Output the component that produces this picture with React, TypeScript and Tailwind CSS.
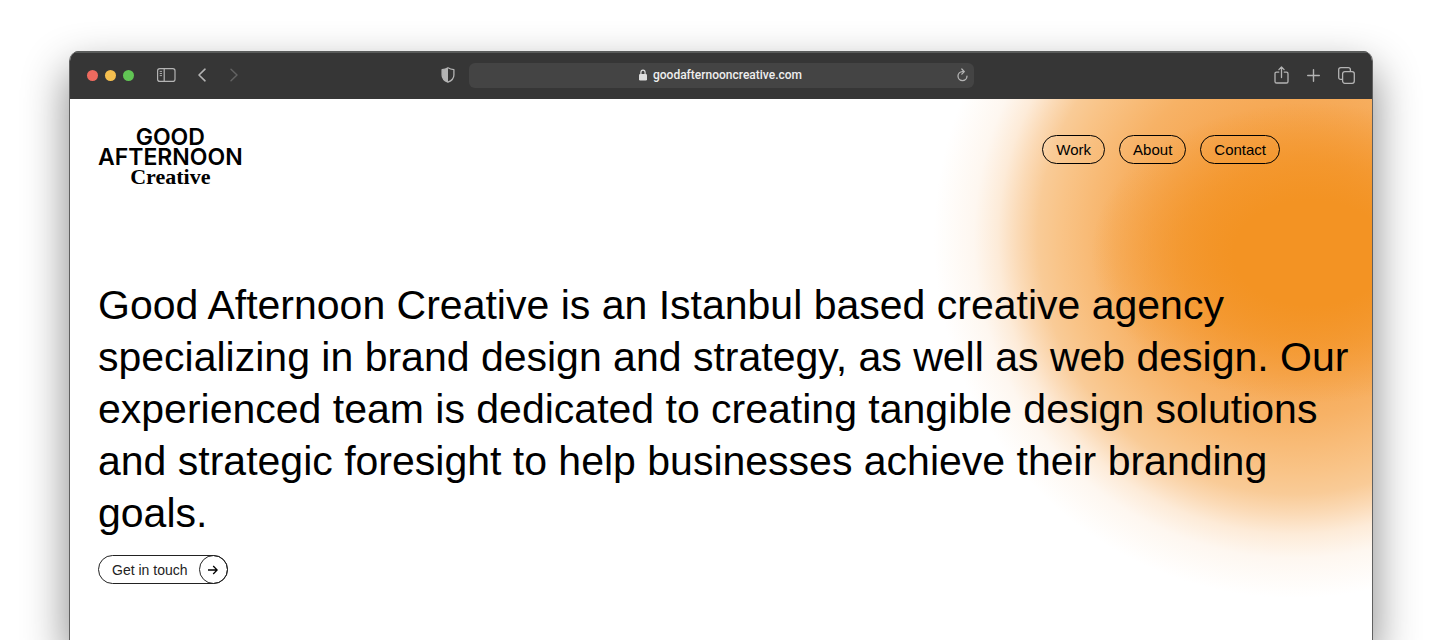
import type { ReactNode } from "react";

const navLinks = ["Work", "About", "Contact"];

function ToolButton({ label, children, className = "" }: { label: string; children: ReactNode; className?: string }) {
  return (
    <button type="button" aria-label={label} className={`flex h-6 shrink-0 items-center justify-center ${className}`}>
      {children}
    </button>
  );
}

function Toolbar() {
  return (
    <header className="flex h-12 shrink-0 items-center border-t-2 border-[#5a5c5b] bg-[#363636] pr-[17px] pb-[2px] pl-[17px] text-[#b4b4b4]">
      <div className="flex flex-1 items-center">
        <div className="flex gap-[7px]">
          <button type="button" aria-label="Close" className="size-[11px] rounded-full bg-[#ed6a5f]" />
          <button type="button" aria-label="Minimize" className="size-[11px] rounded-full bg-[#f5bf4f]" />
          <button type="button" aria-label="Zoom" className="size-[11px] rounded-full bg-[#61c554]" />
        </div>
        <ToolButton label="Sidebar" className="ml-[23px] w-[19px]">
          <svg width="19" height="14" viewBox="0 0 19 14" fill="none" stroke="currentColor">
            <rect x=".6" y=".6" width="17.4" height="12.8" rx="2.2" strokeWidth="1.2" />
            <path d="M7.2 .6V13.4" strokeWidth="1.2" />
            <path d="M2.7 3.4H5M2.7 5.5H5M2.7 7.6H5" strokeWidth=".9" />
          </svg>
        </ToolButton>
        <ToolButton label="Back" className="ml-[21px] w-[10px]">
          <svg width="10" height="14" viewBox="0 0 10 14" fill="none" stroke="currentColor" strokeWidth="1.6" strokeLinecap="round" strokeLinejoin="round">
            <path d="M8 1.2L2 7L8 12.8" />
          </svg>
        </ToolButton>
        <ToolButton label="Forward" className="ml-[22px] w-[10px] text-[#626262]">
          <svg width="10" height="14" viewBox="0 0 10 14" fill="none" stroke="currentColor" strokeWidth="1.5" strokeLinecap="round" strokeLinejoin="round">
            <path d="M2 1.2L8 7L2 12.8" />
          </svg>
        </ToolButton>
        <ToolButton label="Privacy report" className="mr-[14px] ml-auto w-[14px]">
          <svg width="14" height="16" viewBox="0 0 14 16">
            <path d="M7 .8C8.8 2 10.8 2.5 12.9 2.7V8C12.9 11.4 10.8 13.7 7 15.2C3.2 13.7 1.1 11.4 1.1 8V2.7C3.2 2.5 5.2 2 7 .8Z" fill="none" stroke="currentColor" strokeWidth="1.3" strokeLinejoin="round" />
            <path d="M7 .8C5.2 2 3.2 2.5 1.1 2.7V8C1.1 11.4 3.2 13.7 7 15.2Z" fill="currentColor" />
          </svg>
        </ToolButton>
      </div>

      <div className="flex h-[25px] w-[505px] items-center rounded-md bg-[#444444]">
        <span className="w-5 shrink-0" />
        <button type="button" className="flex flex-1 items-center justify-center gap-[6px] font-['Roboto',sans-serif] text-[12px] leading-4 font-medium text-[#eeeeee]">
          <svg width="8" height="12" viewBox="0 0 8 12" className="text-[#dddddd]">
            <path d="M1.9 5.5V3.4C1.9 2 2.7 1.1 4 1.1S6.1 2 6.1 3.4V5.5" fill="none" stroke="currentColor" strokeWidth="1.2" />
            <rect y="5" width="8" height="6.4" rx="1.2" fill="currentColor" />
          </svg>
          goodafternooncreative.com
        </button>
        <ToolButton label="Reload" className="mr-[1px] w-5">
          <svg width="11" height="14" viewBox="0 0 11 14" fill="none" stroke="currentColor" strokeWidth="1.3" strokeLinecap="round" strokeLinejoin="round">
            <path d="M6.6 3.6H5.5A4.5 4.5 0 1 0 10 8.1" />
            <path d="M4.8 1L7.3 3.6L4.8 6.1" />
          </svg>
        </ToolButton>
      </div>

      <div className="flex flex-1 items-center justify-end">
        <ToolButton label="Share" className="w-[15px]">
          <svg width="15" height="18" viewBox="0 0 15 18" fill="none" stroke="currentColor" strokeWidth="1.3" strokeLinecap="round" strokeLinejoin="round">
            <path d="M4.8 6.1H2.6Q1 6.1 1 7.7V15.4Q1 17 2.6 17H12.4Q14 17 14 15.4V7.7Q14 6.1 12.4 6.1H10.2" />
            <path d="M7.5 11.5V1.2M4.9 3.6L7.5 1L10.1 3.6" />
          </svg>
        </ToolButton>
        <ToolButton label="New tab" className="ml-[18px] w-[13px]">
          <svg width="13" height="13" viewBox="0 0 13 13" fill="none" stroke="currentColor" strokeWidth="1.4" strokeLinecap="round">
            <path d="M6.5 .7V12.3M.7 6.5H12.3" />
          </svg>
        </ToolButton>
        <ToolButton label="Show tabs" className="ml-[18px] w-[17px]">
          <svg width="17" height="17" viewBox="0 0 17 17" fill="none" stroke="currentColor" strokeWidth="1.3" strokeLinejoin="round">
            <rect x="4.6" y="4.6" width="11.7" height="11.7" rx="2.2" />
            <path d="M4.6 12.4H2.8Q.7 12.4 .7 10.2V2.8Q.7 .7 2.8 .7H10.2Q12.4 .7 12.4 2.8V4.6" />
          </svg>
        </ToolButton>
      </div>
    </header>
  );
}

function Glow() {
  return (
    <div
      aria-hidden="true"
      className="absolute top-0 right-0 h-[520px] w-[460px] bg-[radial-gradient(220px_150px_at_399px_154px,#f39323_0%,#f39323_35%,#f39323aa_60%,#f3932300_100%),radial-gradient(circle_at_382px_139px,#f49a35_0px,#f5a044_80px,#f6a956_135px,#f7b266_180px,#f9c488_235px,#f9cb97_256px,#fbdab6_276px,#fdebd8_296px,#fef7f0_320px,#ffffff_360px)]"
    />
  );
}

export default function App() {
  return (
    <div className="flex min-h-screen flex-col overflow-hidden bg-white pt-[51px] pr-[67px] pl-[69px] font-['Liberation_Sans',Arial,sans-serif] text-black">
      <div className="flex grow flex-col rounded-t-[10px] shadow-[0_20px_44px_2px_rgba(0,0,0,0.45)]">
        <div className="flex grow flex-col overflow-hidden rounded-t-[10px] border-x border-[#606060] bg-white">
          <Toolbar />
          <main className="relative grow pt-7 pr-3 pb-14 pl-7">
            <Glow />
            <div className="relative flex items-start justify-between pr-20">
              <a href="#home" className="flex flex-col items-center">
                <span className="font-['Inter',sans-serif] text-[23px] leading-5 font-semibold">GOOD</span>
                <span className="font-['Inter',sans-serif] text-[23px] leading-5 font-semibold">AFTERNOON</span>
                <span className="font-['Liberation_Serif',serif] text-[22px] leading-5 font-bold">Creative</span>
              </a>
              <nav className="mt-2 flex gap-[14px]">
                {navLinks.map((name) => (
                  <a key={name} href={`#${name.toLowerCase()}`} className="flex h-[29px] items-center rounded-full border border-black px-[13px] text-[15px] leading-5">
                    {name}
                  </a>
                ))}
              </nav>
            </div>
            <h1 className="relative mt-[92px] text-[41px] leading-[52px]">
              Good Afternoon Creative is an Istanbul based creative agency specializing in brand design and strategy, as
              well as web design. Our experienced team is dedicated to creating tangible design solutions and strategic
              foresight to help businesses achieve their branding goals.
            </h1>
            <a href="#contact" className="relative mt-4 inline-flex h-[29px] items-center gap-[11px] rounded-full border border-[#222222] pl-[13px] text-[14px] leading-5 text-[#222222]">
              Get in touch
              <span className="-my-px -mr-px flex size-[29px] items-center justify-center rounded-full border border-[#222222]">
                <svg width="10" height="10" viewBox="0 0 10 10" fill="none" stroke="black" strokeWidth="1.3">
                  <path d="M0 5H9M5.2 1L9.2 5L5.2 9" />
                </svg>
              </span>
            </a>
          </main>
        </div>
      </div>
    </div>
  );
}
